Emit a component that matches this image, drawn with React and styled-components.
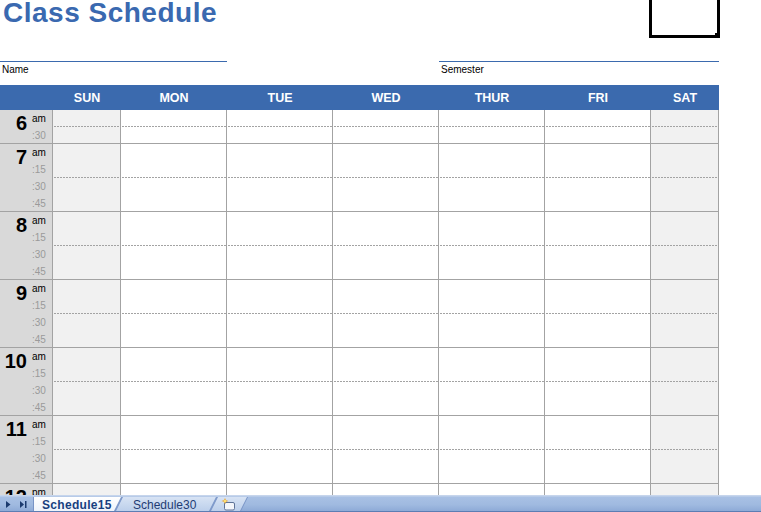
import React from 'react';
import styled, { createGlobalStyle } from 'styled-components';

const GlobalStyle = createGlobalStyle`
  html, body { margin: 0; padding: 0; background: #fff; }
  body { font-family: "Liberation Sans", Arial, sans-serif; }
`;

const COLS = '53px 68px 106px 106px 106px 106px 106px 68px';
const LINE = '#a3a3a3';
const BLUE = '#3b6aae';
const QUARTER = 17;

const days = ['SUN', 'MON', 'TUE', 'WED', 'THUR', 'FRI', 'SAT'];

const hours = [
  { h: 6, labels: ['am', ':30'] },
  { h: 7, labels: ['am', ':15', ':30', ':45'] },
  { h: 8, labels: ['am', ':15', ':30', ':45'] },
  { h: 9, labels: ['am', ':15', ':30', ':45'] },
  { h: 10, labels: ['am', ':15', ':30', ':45'] },
  { h: 11, labels: ['am', ':15', ':30', ':45'] },
  { h: 12, labels: ['pm', ':15', ':30', ':45'] },
  { h: 1, labels: ['pm', ':15', ':30', ':45'] },
];

const Page = styled.div`
  position: relative;
  width: 761px;
  height: 512px;
  display: flex;
  flex-direction: column;
  overflow: hidden;
`;

const Sheet = styled.div`
  flex: 1;
  min-height: 0;
  overflow: hidden;
`;

const TitleArea = styled.div`
  height: 61px;
  padding-left: 3px;
`;

const Title = styled.h1`
  margin: 0;
  font-size: 28px;
  line-height: 26px;
  font-weight: bold;
  letter-spacing: 0.5px;
  color: #3a69b0;
`;

const Selection = styled.div`
  position: absolute;
  left: 649px;
  top: -4px;
  width: 71px;
  height: 42px;
  box-sizing: border-box;
  border: 3px solid #000;
`;

const FillHandle = styled.div`
  position: absolute;
  right: -4px;
  bottom: -4px;
  width: 5px;
  height: 5px;
  background: #000;
  border: 1px solid #fff;
  border-top: none;
  border-left: none;
`;

const Grid = styled.div`
  display: grid;
  grid-template-columns: ${COLS};
  width: 719px;
`;

const FieldsRow = styled(Grid)`
  height: 24px;
`;

const Field = styled.div`
  grid-column: ${p => p.$span};
  border-top: 1px solid ${BLUE};
  font-size: 10px;
  line-height: 12px;
  padding: 2px 0 0 2px;
  color: #000;
`;

const HeaderRow = styled(Grid)`
  height: 25px;
  background: ${BLUE};
`;

const HeadCell = styled.div`
  display: flex;
  align-items: center;
  justify-content: center;
  color: #fff;
  font-weight: bold;
  font-size: 12.5px;
`;

const TimeCell = styled.div`
  display: flex;
  background: #d9d9d9;
  border-right: 1px solid ${LINE};
  border-bottom: 1px solid ${LINE};
  height: ${p => p.$h}px;
  box-sizing: border-box;
`;

const HourNum = styled.div`
  width: 27px;
  text-align: right;
  font-size: 20px;
  line-height: 20px;
  font-weight: bold;
  padding-top: 3px;
  color: #000;
`;

const Labels = styled.div`
  margin-left: 5px;
  display: flex;
  flex-direction: column;
`;

const Label = styled.div`
  height: ${QUARTER}px;
  line-height: ${QUARTER}px;
  font-size: 10px;
  color: ${p => (p.$main ? '#000' : '#9a9a9a')};
`;

const DayCol = styled.div`
  display: flex;
  flex-direction: column;
  border-right: 1px solid ${LINE};
  background-color: ${p => (p.$weekend ? '#f1f1f1' : '#fff')};
`;

const Half = styled.div`
  box-sizing: border-box;
  height: ${p => p.$h}px;
  ${p =>
    p.$dashed
      ? `background-image: linear-gradient(to right, ${LINE} 2px, transparent 2px);
         background-size: 3px 1px;
         background-repeat: repeat-x;
         background-position: 1px bottom;`
      : `border-bottom: 1px solid ${LINE};`}
`;

const TabBar = styled.div`
  flex: none;
  height: 17px;
  box-sizing: border-box;
  display: flex;
  padding-top: 2px;
  background: linear-gradient(#c6d5ec 0, #c6d5ec 1px, #a8c0e4 2px, #a0bae0 60%, #8eaad7 100%);
  border-bottom: 1px solid #5d7db3;
`;

const Nav = styled.div`
  width: 33px;
  display: flex;
  align-items: center;
  gap: 9px;
  padding-left: 6px;
  box-sizing: border-box;
`;

const TabOuter = styled.div`
  position: relative;
  z-index: ${p => (p.$active ? 3 : p.$z)};
  width: ${p => p.$w}px;
  margin-left: ${p => (p.$first ? 0 : -7)}px;
  padding: 0 1px 0 1px;
  box-sizing: border-box;
  background: #7894c6;
  clip-path: ${p =>
    p.$first
      ? 'polygon(0 0, 100% 0, calc(100% - 7px) 100%, 0 100%)'
      : 'polygon(7px 0, 100% 0, calc(100% - 7px) 100%, 0 100%)'};
`;

const TabInner = styled.div`
  height: 100%;
  padding-top: 1px;
  box-sizing: border-box;
  display: flex;
  align-items: center;
  padding-left: ${p => p.$pad}px;
  background: ${p =>
    p.$active
      ? 'linear-gradient(#ffffff, #eef3fb)'
      : 'linear-gradient(#d7e3f4, #bccfeb)'};
  clip-path: ${p =>
    p.$first
      ? 'polygon(0 0, 100% 0, calc(100% - 7px) 100%, 0 100%)'
      : 'polygon(7px 0, 100% 0, calc(100% - 7px) 100%, 0 100%)'};
  font-size: 12px;
  font-weight: ${p => (p.$active ? 'bold' : 'normal')};
  letter-spacing: ${p => (p.$active ? '0.3px' : '0')};
  color: ${p => (p.$active ? '#173f80' : '#1f3c74')};
  white-space: nowrap;
`;

const Arrow = () => (
  <svg width="5" height="7" viewBox="0 0 5 7">
    <polygon points="0,0 4.5,3.5 0,7" fill="#1b3a6e" />
  </svg>
);

const LastArrow = () => (
  <svg width="7" height="7" viewBox="0 0 7 7">
    <polygon points="0,0 4,3.5 0,7" fill="#1b3a6e" />
    <rect x="5" y="0" width="1.5" height="7" fill="#1b3a6e" />
  </svg>
);

const InsertIcon = () => (
  <svg width="15" height="13" viewBox="0 0 15 13">
    <rect x="3.5" y="4.5" width="10" height="7.5" rx="1.5" fill="#f4f6fa" stroke="#5f7397" />
    <path d="M4 0 L4.9 2.3 L7.5 3 L4.9 3.7 L4 6 L3.1 3.7 L0.5 3 L3.1 2.3 Z" fill="#f19a12" />
    <circle cx="4" cy="3" r="1.2" fill="#ffe470" />
  </svg>
);

function HourBlock({ h, labels }) {
  const total = labels.length * QUARTER;
  const half = total / 2;
  return (
    <Grid>
      <TimeCell $h={total}>
        <HourNum>{h}</HourNum>
        <Labels>
          {labels.map((l, i) => (
            <Label key={i} $main={i === 0}>{l}</Label>
          ))}
        </Labels>
      </TimeCell>
      {days.map(d => (
        <DayCol key={d} $weekend={d === 'SUN' || d === 'SAT'}>
          <Half $h={half} $dashed />
          <Half $h={half} />
        </DayCol>
      ))}
    </Grid>
  );
}

export default function App() {
  return (
    <Page>
      <GlobalStyle />
      <Sheet>
        <TitleArea>
          <Title>Class Schedule</Title>
        </TitleArea>
        <FieldsRow>
          <Field $span="1 / 4">Name</Field>
          <Field $span="6 / 9">Semester</Field>
        </FieldsRow>
        <HeaderRow>
          <HeadCell />
          {days.map(d => (
            <HeadCell key={d}>{d}</HeadCell>
          ))}
        </HeaderRow>
        {hours.map(row => (
          <HourBlock key={row.h} {...row} />
        ))}
      </Sheet>
      <Selection>
        <FillHandle />
      </Selection>
      <TabBar>
        <Nav>
          <Arrow />
          <LastArrow />
        </Nav>
        <TabOuter $first $active $w={89}>
          <TabInner $first $active $pad={8}>Schedule15</TabInner>
        </TabOuter>
        <TabOuter $z={2} $w={102}>
          <TabInner $pad={17}>Schedule30</TabInner>
        </TabOuter>
        <TabOuter $z={1} $w={38}>
          <TabInner $pad={10}>
            <InsertIcon />
          </TabInner>
        </TabOuter>
      </TabBar>
    </Page>
  );
}
